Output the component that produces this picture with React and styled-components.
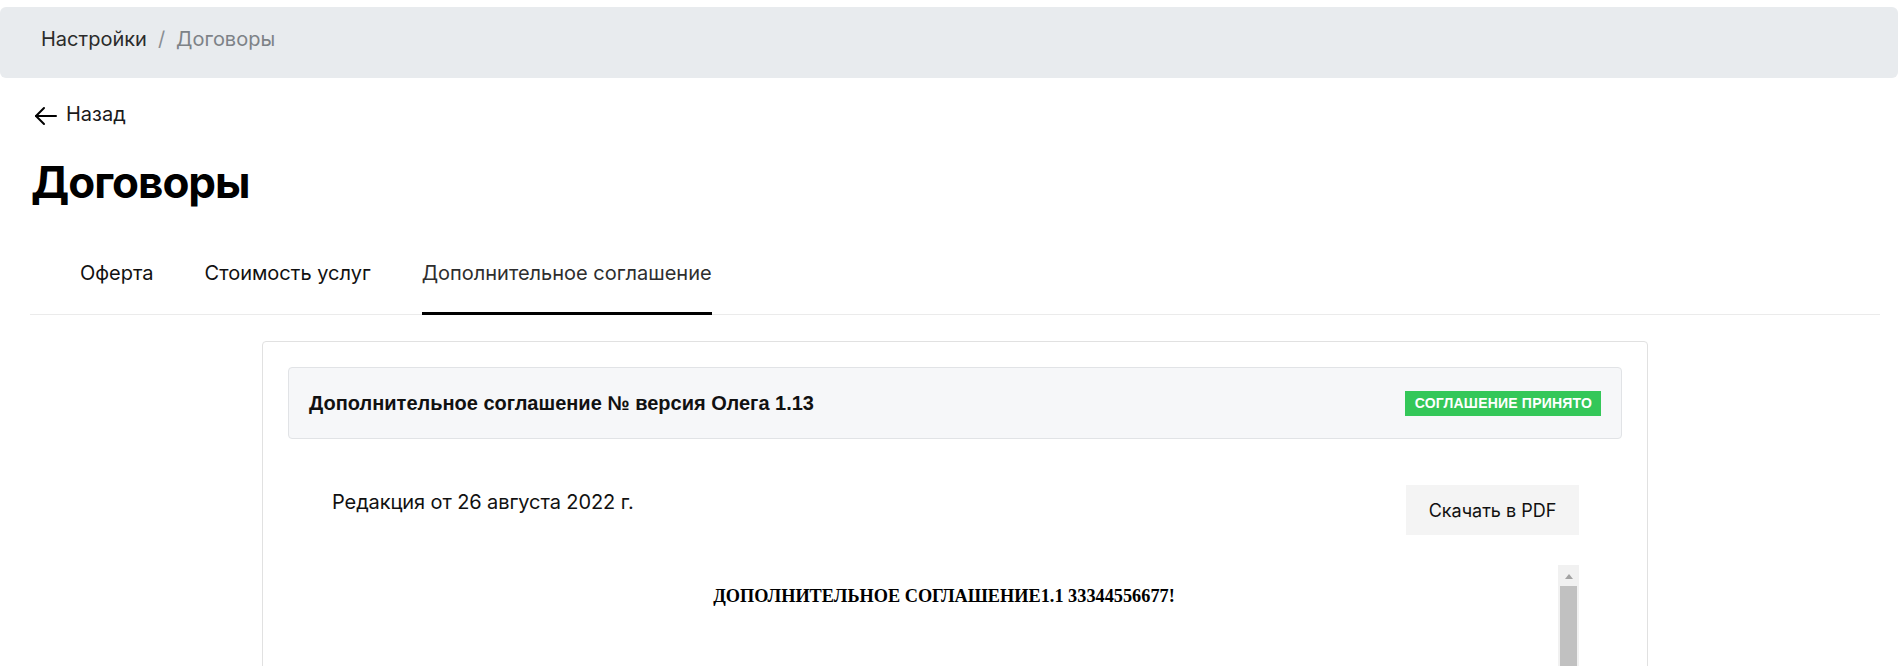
import React from "react";
import styled, { createGlobalStyle } from "styled-components";

const GlobalStyle = createGlobalStyle`
  html, body {
    margin: 0;
    padding: 0;
    background: #ffffff;
    overflow: hidden;
  }
  body {
    font-family: Inter, "Noto Sans", Roboto, sans-serif;
    color: #000;
  }
  * { box-sizing: border-box; }
`;

const Page = styled.div`
  padding-top: 7px;
`;

const Breadcrumbs = styled.nav`
  height: 71px;
  background: #e8ebee;
  border-radius: 6px;
  padding: 20px 41px 0;
  display: flex;
  align-items: flex-start;
  gap: 11px;
  font-size: 20px;
  line-height: 24px;
`;

const Crumb = styled.span`
  color: ${(p) => (p.$current ? "#7d8287" : "#2b2b2b")};
`;

const Separator = styled.span`
  color: #8a8f94;
`;

const Content = styled.main`
  padding: 0 18px 0 30px;
`;

const BackLink = styled.a`
  display: flex;
  align-items: center;
  gap: 9px;
  margin: 24px 0 0 4px;
  height: 24px;
  font-size: 20px;
  line-height: 24px;
  color: #1a1a1a;
  text-decoration: none;
  cursor: pointer;
  width: max-content;
`;

const ArrowIcon = styled.svg`
  width: 23px;
  height: 20px;
  margin-top: 4px;
  flex: none;
`;

const Title = styled.h1`
  margin: 30px 0 0 1px;
  font-size: 44px;
  line-height: 52px;
  font-weight: 700;
  letter-spacing: -1px;
  color: #000;
`;

const Tabs = styled.div`
  margin-top: 53px;
  padding-left: 50px;
  display: flex;
  gap: 51px;
  border-bottom: 1px solid #ebebeb;
`;

const Tab = styled.button`
  appearance: none;
  background: none;
  border: none;
  border-bottom: 3px solid ${(p) => (p.$active ? "#000" : "transparent")};
  margin: 0 0 -1px;
  padding: 0 0 27px;
  font-family: inherit;
  font-size: 20px;
  line-height: 24px;
  color: ${(p) => (p.$active ? "#2e2e2e" : "#111")};
  cursor: pointer;
`;

const Card = styled.section`
  width: 1386px;
  margin: 26px auto 0;
  border: 1px solid #e1e1e1;
  border-radius: 4px;
  padding: 25px 25px 0;
`;

const CardHeader = styled.header`
  height: 72px;
  background: #f6f7f9;
  border: 1px solid #e1e3e6;
  border-radius: 4px;
  padding: 0 20px 0 20px;
  display: flex;
  align-items: center;
  justify-content: space-between;
`;

const CardTitle = styled.h2`
  margin: 0;
  font-family: "Liberation Sans", Arial, sans-serif;
  font-size: 20px;
  font-weight: 700;
  color: #111;
`;

const Badge = styled.span`
  height: 25px;
  padding: 0 9px 0 10px;
  display: inline-flex;
  align-items: center;
  background: #34c759;
  color: #ffffff;
  font-family: "Liberation Sans", Arial, sans-serif;
  font-size: 14px;
  font-weight: 700;
  letter-spacing: 0.2px;
  text-transform: uppercase;
`;

const CardBody = styled.div`
  padding: 46px 43px 0 42px;
`;

const BodyTop = styled.div`
  display: flex;
  justify-content: space-between;
  align-items: flex-start;
`;

const Edition = styled.p`
  margin: 5px 0 0 2px;
  font-size: 20px;
  line-height: 24px;
  letter-spacing: -0.1px;
  color: #111;
`;

const DownloadButton = styled.button`
  appearance: none;
  border: none;
  height: 50px;
  width: 173px;
  background: #f4f4f4;
  font-family: inherit;
  font-size: 18px;
  color: #111;
  cursor: pointer;
`;

const DocFrame = styled.div`
  margin-top: 30px;
  height: 400px;
  display: flex;
`;

const DocViewport = styled.div`
  flex: 1;
  overflow: hidden;
`;

const ScrollTrack = styled.div`
  width: 21px;
  flex: none;
  background: #f1f1f1;
  display: flex;
  flex-direction: column;
`;

const ScrollUp = styled.div`
  height: 21px;
  display: flex;
  justify-content: center;
  padding-top: 9px;

  &::before {
    content: "";
    width: 0;
    height: 0;
    border-left: 4.5px solid transparent;
    border-right: 4.5px solid transparent;
    border-bottom: 5px solid #a3a3a3;
  }
`;

const ScrollThumb = styled.div`
  margin: 0 2px;
  height: 220px;
  background: #c1c1c1;
`;

const DocPage = styled.article`
  padding-top: 21px;
  font-family: "Liberation Serif", "Times New Roman", serif;
`;

const DocHeading = styled.h3`
  margin: 0;
  text-align: center;
  font-size: 18.3px;
  font-weight: 700;
  color: #000;
`;

export default function App() {
  return (
    <>
      <GlobalStyle />
      <Page>
        <Breadcrumbs>
          <Crumb>Настройки</Crumb>
          <Separator>/</Separator>
          <Crumb $current>Договоры</Crumb>
        </Breadcrumbs>
        <Content>
          <BackLink>
            <ArrowIcon viewBox="0 0 23 20" fill="none" stroke="#000" strokeWidth="2" strokeLinecap="round" strokeLinejoin="round">
              <path d="M22 10H2" />
              <path d="M10 2 2 10l8 8" />
            </ArrowIcon>
            Назад
          </BackLink>
          <Title>Договоры</Title>
          <Tabs>
            <Tab>Оферта</Tab>
            <Tab>Стоимость услуг</Tab>
            <Tab $active>Дополнительное соглашение</Tab>
          </Tabs>
          <Card>
            <CardHeader>
              <CardTitle>Дополнительное соглашение № версия Олега 1.13</CardTitle>
              <Badge>Соглашение принято</Badge>
            </CardHeader>
            <CardBody>
              <BodyTop>
                <Edition>Редакция от 26 августа 2022 г.</Edition>
                <DownloadButton>Скачать в PDF</DownloadButton>
              </BodyTop>
              <DocFrame>
                <DocViewport>
                  <DocPage>
                    <DocHeading>ДОПОЛНИТЕЛЬНОЕ СОГЛАШЕНИЕ1.1 33344556677!</DocHeading>
                  </DocPage>
                </DocViewport>
                <ScrollTrack aria-hidden="true">
                  <ScrollUp />
                  <ScrollThumb />
                </ScrollTrack>
              </DocFrame>
            </CardBody>
          </Card>
        </Content>
      </Page>
    </>
  );
}
